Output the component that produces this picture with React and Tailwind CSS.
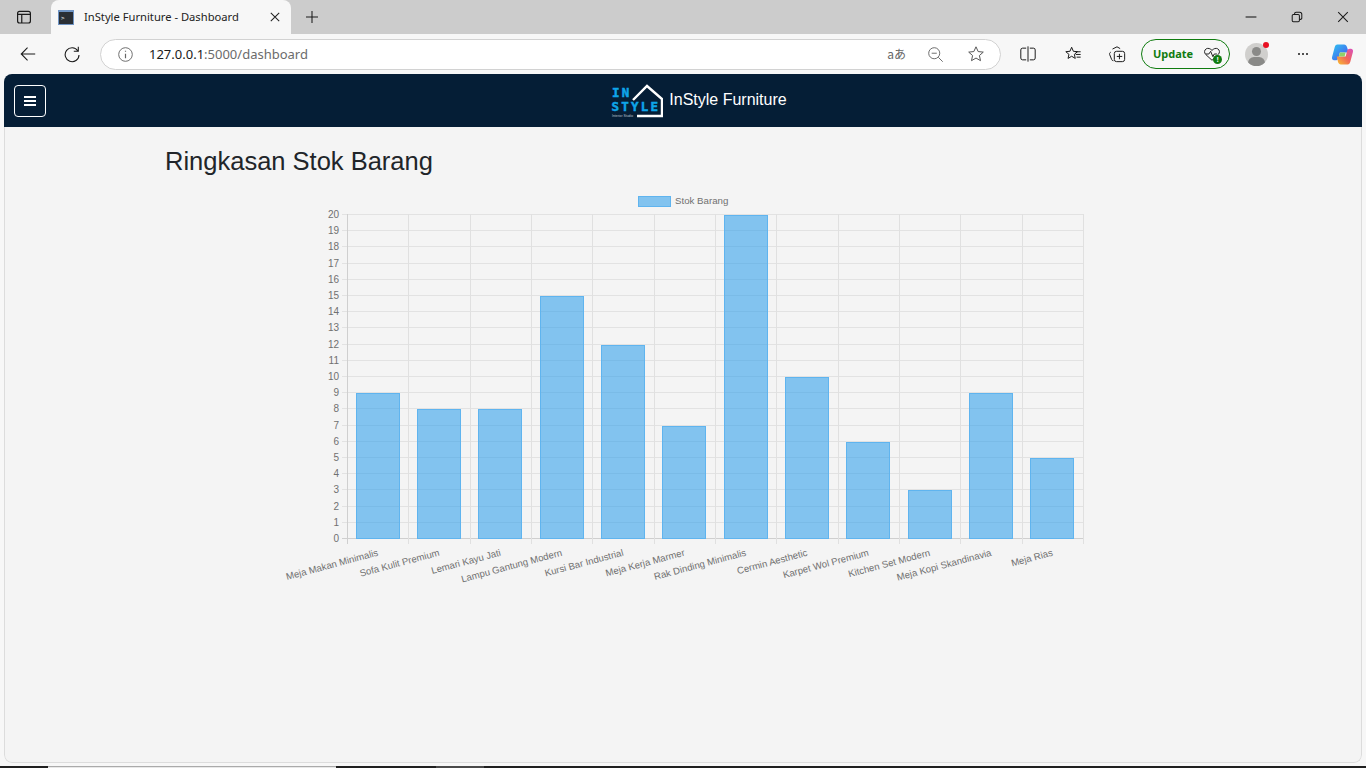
import React from 'react';

const labels = [
  ['Meja Makan Minimalis', 9],
  ['Sofa Kulit Premium', 8],
  ['Lemari Kayu Jati', 8],
  ['Lampu Gantung Modern', 15],
  ['Kursi Bar Industrial', 12],
  ['Meja Kerja Marmer', 7],
  ['Rak Dinding Minimalis', 20],
  ['Cermin Aesthetic', 10],
  ['Karpet Wol Premium', 6],
  ['Kitchen Set Modern', 3],
  ['Meja Kopi Skandinavia', 9],
  ['Meja Rias', 5],
];

const CHART_LEFT = 347;
const CHART_RIGHT = 1083;
const CHART_TOP = 214;
const CHART_BOTTOM = 538;
const STEP_X = (CHART_RIGHT - CHART_LEFT) / 12;
const STEP_Y = (CHART_BOTTOM - CHART_TOP) / 20;

const StockChart = () => (
  <svg width="830" height="410" viewBox="270 190 830 410" className="block ml-[265px] mt-[13px]" style={{ fontFamily: '"Liberation Sans", Arial, sans-serif' }}>
    {/* legend */}
    <rect x="638.5" y="196.5" width="32" height="10" fill="#36a2eb" fillOpacity="0.6" stroke="#5fb4ef" />
    <text x="675" y="204" fontSize="9.7" fill="#707070">Stok Barang</text>

    {/* grid */}
    {Array.from({ length: 21 }, (_, i) => {
      const y = Math.round(CHART_BOTTOM - i * STEP_Y) + 0.5;
      return (
        <g key={i}>
          <line x1="342" x2={CHART_RIGHT} y1={y} y2={y} stroke={i === 0 ? '#cfcfcf' : '#e2e2e2'} />
          <text x="339" y={y + 3} fontSize="10" fill="#707070" textAnchor="end">{i}</text>
        </g>
      );
    })}
    {Array.from({ length: 13 }, (_, i) => {
      const x = Math.round(CHART_LEFT + i * STEP_X) + 0.5;
      return <line key={i} x1={x} x2={x} y1={CHART_TOP} y2="544" stroke={i === 0 ? '#cfcfcf' : '#e0e0e0'} />;
    })}

    {/* bars */}
    {labels.map(([name, value], i) => {
      const center = CHART_LEFT + (i + 0.5) * STEP_X;
      const top = Math.round(CHART_BOTTOM - value * STEP_Y);
      return (
        <g key={name}>
          <rect x={Math.round(center - 22) + 0.5} y={top + 1.5} width="43" height={CHART_BOTTOM - top - 1} fill="#36a2eb" fillOpacity="0.6" stroke="#5fb4ef" />
          <text x="0" y="0" fontSize="9.6" fill="#707070" textAnchor="end" transform={`translate(${center + 1} 555.5) rotate(-15)`}>{name}</text>
        </g>
      );
    })}
  </svg>
);

const Logo = () => (
  <svg width="52" height="34" viewBox="0 0 52 34" className="block">
    <path d="M22 16 L36 2 L51 15 V32 H26" fill="none" stroke="#fff" strokeWidth="2.4" />
    <text x="1" y="13" fontSize="12.5" fontWeight="700" fill="#0ea5e9" stroke="#0ea5e9" strokeWidth="0.5" letterSpacing="2.2" fontFamily='"DejaVu Sans Mono", monospace'>IN</text>
    <text x="0.5" y="27" fontSize="12.5" fontWeight="700" fill="#0ea5e9" stroke="#0ea5e9" strokeWidth="0.5" letterSpacing="2.2" fontFamily='"DejaVu Sans Mono", monospace'>STYLE</text>
    <text x="1" y="32.5" fontSize="3.4" fill="#b9c4cf" fontFamily='"Liberation Sans", sans-serif'>Interior Studio</text>
  </svg>
);

const Ico = ({ children, size = 20, className = '' }) => (
  <svg width={size} height={size} viewBox="0 0 20 20" fill="none" stroke="currentColor" strokeWidth="1.1" className={`block shrink-0 ${className}`}>
    {children}
  </svg>
);

const CopilotIcon = () => (
  <svg width="25" height="25" viewBox="0 0 24 24" className="block ml-[-6px]">
    <defs>
      <linearGradient id="cpA" x1="0" y1="0" x2="1" y2="1">
        <stop offset="0" stopColor="#2ec5f0" />
        <stop offset="0.6" stopColor="#3f7cf0" />
        <stop offset="1" stopColor="#8a5cf0" />
      </linearGradient>
      <linearGradient id="cpB" x1="0" y1="1" x2="1" y2="0">
        <stop offset="0" stopColor="#f9c22e" />
        <stop offset="0.5" stopColor="#f0645a" />
        <stop offset="1" stopColor="#d94fc0" />
      </linearGradient>
    </defs>
    <path d="M7 2.500h6.500c1.500 0 2.300 1 2.800 2.300L18 10H9.500L8 15.500c-.4 1.300-1.300 2-2.600 2H4C2.400 17.500 1.500 16 2 14.300L4.500 5C5 3.400 5.700 2.500 7 2.500z" fill="url(#cpA)" />
    <path d="M17 21.500h-6.500c-1.500 0-2.300-1-2.800-2.300L6.500 14H15l1.500-5.500c.4-1.300 1.300-2 2.600-2H20c1.600 0 2.500 1.500 2 3.200L19.500 19c-.5 1.600-1.200 2.500-2.500 2.500z" fill="url(#cpB)" />
    <path d="M9.500 10H15l-1 4H8.500z" fill="#8fd16a" />
  </svg>
);

const App = () => (
  <div className="w-[1366px] h-[768px] overflow-hidden flex flex-col bg-[#f7f7f7]" style={{ fontFamily: '"Liberation Sans", Arial, sans-serif' }}>
    {/* tab strip */}
    <div className="h-[34px] shrink-0 bg-[#cccccc] flex items-stretch">
      <div className="w-[48px] flex items-center justify-center text-[#1a1a1a]">
        <Ico size={16}>
          <rect x="2" y="3" width="16" height="14.500" rx="2.500" strokeWidth="1.500" />
          <path d="M2 6.800h16M7.200 6.800v10.700" strokeWidth="1.500" />
        </Ico>
      </div>
      <div className="w-[240px] ml-[3px] bg-[#f7f7f7] rounded-t-[8px] flex items-center pl-[7px] pr-[9px]">
        <div className="w-4 h-[15px] bg-[#2a2f35] border-t-[2px] border-x border-b border-[#6f94c4] flex items-center pl-[2px] text-[6px] leading-none text-white" style={{ fontFamily: '"DejaVu Sans Mono", monospace' }}>&gt;</div>
        <span className="ml-[10px] flex-1 text-[11.200px] text-[#222]" style={{ fontFamily: '"Noto Sans", sans-serif' }}>InStyle Furniture - Dashboard</span>
        <Ico size={14} className="text-[#222]"><path d="M4 4l12 12M16 4L4 16" strokeWidth="1.500" /></Ico>
      </div>
      <div className="w-[42px] flex items-center justify-center text-[#1a1a1a]">
        <Ico size={16}><path d="M10 2.500v15M2.500 10h15" strokeWidth="1.300" /></Ico>
      </div>
      <div className="flex-1" />
      <div className="w-[138px] flex items-center text-[#1a1a1a]">
        <div className="w-[46px] flex justify-center"><Ico size={12}><path d="M1 10h18" strokeWidth="1.800" /></Ico></div>
        <div className="w-[46px] flex justify-center">
          <Ico size={12}><rect x="2" y="6" width="12" height="12" rx="2" strokeWidth="1.700" /><path d="M6 6V4.500C6 3 7 2 8.500 2h6C16.500 2 18 3.500 18 5.500v6c0 1.500-1 2.500-4 2.500" strokeWidth="1.700" /></Ico>
        </div>
        <div className="w-[46px] flex justify-center"><Ico size={12}><path d="M2 2l16 16M18 2L2 18" strokeWidth="1.700" /></Ico></div>
      </div>
    </div>

    {/* toolbar */}
    <div className="h-[40px] shrink-0 bg-[#f7f7f7] flex items-center">
      <div className="w-[55px] flex justify-center text-[#1a1a1a]">
        <Ico size={18}><path d="M18 10H2.500M9.500 3l-7 7 7 7" strokeWidth="1.200" /></Ico>
      </div>
      <div className="w-[33px] flex justify-center text-[#1a1a1a]">
        <Ico size={18}><path d="M16.500 6.500A7.700 7.700 0 1 0 17.800 11" strokeWidth="1.200" /><path d="M17 2v5h-5" strokeWidth="1.200" /></Ico>
      </div>
      <div className="w-[901px] h-[31px] ml-[12px] bg-white rounded-full border border-[#d2d2d2] flex items-center">
        <div className="ml-[16px] text-[#666]">
          <Ico size={17}><circle cx="10" cy="10" r="8" /><path d="M10 9v5.500M10 5.500v1.300" strokeWidth="1.400" /></Ico>
        </div>
        <span className="ml-[15px] mt-[1px] text-[13px] text-[#1a1a1a]" style={{ fontFamily: '"Noto Sans", sans-serif' }}>127.0.0.1<span className="text-[#6b6b6b]">:5000/dashboard</span></span>
        <div className="flex-1" />
        <span className="text-[12px] leading-none text-[#666] mr-[21px]" style={{ fontFamily: '"Noto Sans CJK JP", sans-serif' }}>aあ</span>
        <div className="text-[#666] mr-[23px]">
          <Ico size={17}><circle cx="8.500" cy="8.500" r="6.500" /><path d="M13.300 13.300L18.500 18.500M5.500 8.500h6" /></Ico>
        </div>
        <div className="text-[#555] mr-[15px]">
          <Ico size={18}><path d="M10 2l2.400 5.300 5.700.6-4.300 3.800 1.200 5.700L10 14.500l-5 2.900 1.200-5.700L1.900 7.900l5.700-.6z" /></Ico>
        </div>
      </div>
      <div className="w-[50px] ml-[2px] flex justify-center text-[#1a1a1a]">
        <Ico size={18}><path d="M8 3.500H4a2 2 0 0 0-2 2v9a2 2 0 0 0 2 2h4M12 3.500h4a2 2 0 0 1 2 2v9a2 2 0 0 1-2 2h-4M10 1.500v17" /></Ico>
      </div>
      <div className="w-[39px] flex justify-center text-[#1a1a1a]">
        <Ico size={18}><path d="M8.500 2.500l1.900 4.500 4.600.4-3.500 3 1 4.500-4-2.400-4 2.400 1-4.500-3.500-3 4.600-.4z" /><path d="M13 10.500h5.500M14 13.500h4.500M12.500 7.500h6" /></Ico>
      </div>
      <div className="w-[50px] flex justify-center text-[#1a1a1a]">
        <Ico size={18}><path d="M5 4.500l5-2.500 3.500 2M3 8c-1 .5-1.500 1.300-1.200 2.500L4 16c.4 1 1 1.500 2 1.500" /><rect x="7" y="7" width="11.500" height="11.500" rx="2.500" /><path d="M12.700 9.800v6M9.800 12.700h6" /></Ico>
      </div>
      <div className="w-[89px] h-[30px] ml-[-1px] rounded-full border border-[#107c10] flex items-center pl-[11px]">
        <span className="text-[11px] font-bold text-[#107c10]" style={{ fontFamily: '"Noto Sans", sans-serif' }}>Update</span>
        <div className="relative ml-[10px] text-[#222]">
          <Ico size={18}><path d="M10 17L3 10.500C1 8.500 1.500 5.500 3.500 4.300 5.800 3 8 4 10 6c2-2 4.200-3 6.500-1.700 2 1.200 2.500 4.200.5 6.200L10 17z" /><path d="M3 10h3.500l2-3 2.500 6 1.500-3h3" /></Ico>
          <span className="absolute right-[-1px] bottom-[-1px] w-[9px] h-[9px] rounded-full bg-[#107c10] text-white text-[7px] font-bold leading-[9px] text-center">!</span>
        </div>
      </div>
      <div className="relative w-[23px] h-[23px] ml-[15px] rounded-full bg-[#d0cfcd] overflow-hidden">
        <div className="absolute left-[7px] top-[4px] w-[9px] h-[9px] rounded-full bg-[#8a8a88]" />
        <div className="absolute left-[3px] top-[14px] w-[17px] h-[12px] rounded-full bg-[#8a8a88]" />
      </div>
      <div className="relative w-0 h-[23px]">
        <span className="absolute left-[-5px] top-[-1px] w-[6px] h-[6px] rounded-full bg-[#e81123]" />
      </div>
      <div className="w-[68px] flex justify-center text-[#1a1a1a] gap-[2px] pl-[1px]">
        <span className="w-[2px] h-[2px] bg-[#1a1a1a] rounded-full" />
        <span className="w-[2px] h-[2px] bg-[#1a1a1a] rounded-full" />
        <span className="w-[2px] h-[2px] bg-[#1a1a1a] rounded-full" />
      </div>
      <CopilotIcon />
    </div>

    {/* page */}
    <div className="w-[1358px] h-[689px] shrink-0 ml-[4px] rounded-[8px] overflow-hidden flex flex-col">
      <nav className="h-[53px] shrink-0 bg-[#051e36] flex items-center pl-[10px] pr-[10px]">
        <button className="w-[32px] h-[32px] rounded-[4px] border border-white flex flex-col items-center justify-center gap-[2px]">
          <span className="w-[12px] h-[2px] bg-white" />
          <span className="w-[12px] h-[2px] bg-white" />
          <span className="w-[12px] h-[2px] bg-white" />
        </button>
        <div className="flex-1 flex items-center justify-center">
          <Logo />
          <span className="ml-[6px] mb-[2px] text-[16px] text-white">InStyle Furniture</span>
        </div>
      </nav>
      <div className="flex-1 bg-[#f4f4f4] border-x border-b border-[#dcdcdc] rounded-b-[8px] pt-[19px]">
        <h2 className="ml-[160px] text-[25.500px] leading-[31px] text-[#212529]">Ringkasan Stok Barang</h2>
        <StockChart />
      </div>
    </div>

    {/* taskbar sliver */}
    <div className="flex-1" />
    <div className="h-[2px] shrink-0 bg-[#202020] flex">
      <div className="w-[48px]" />
      <div className="w-[288px] bg-[#e8e8e8] border-t border-[#aaaaaa]" />
      <div className="w-[100px]" />
      <div className="w-[48px] bg-[#4a4a4a]" />
    </div>
  </div>
);

export default App;
